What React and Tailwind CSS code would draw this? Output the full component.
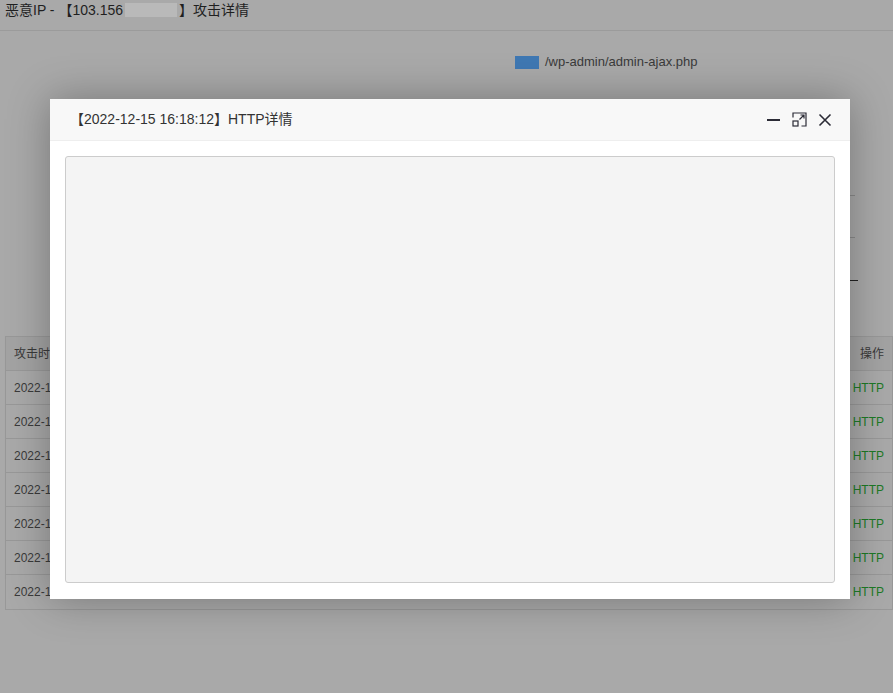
import React from "react";

const rows = Array.from({ length: 7 });

export default function App() {
  return (
    <div
      className="relative w-[893px] h-[693px] overflow-hidden bg-[#a9a9a9] text-[#2a2a2a]"
      style={{ fontFamily: '"Liberation Sans", Arial, "Noto Sans CJK SC", sans-serif' }}
    >
      {/* underlying page */}
      <div className="h-[31px] border-b border-[#9b9b9b] flex items-start pt-[1px] px-[5px] text-[14px] leading-[18px] text-[#1f1f1f]">
        <span>恶意IP - 【103.156</span>
        <span className="inline-block w-[52px] h-[14px] mt-[2px] mx-[2px] bg-[#b9b9b9]" />
        <span>】攻击详情</span>
      </div>
      <div className="relative h-[305px]">
        <div className="flex items-center gap-[6px] pl-[515px] pt-[24px] text-[13px] leading-[14px] text-[#3a3a3a]">
          <span className="inline-block w-[24px] h-[13px] bg-[#3f78b3]" />
          <span>/wp-admin/admin-ajax.php</span>
        </div>
        <div className="absolute left-[850px] top-[164px] w-[5px] h-px bg-[#8a8a8a]" />
        <div className="absolute left-[850px] top-[206px] w-[5px] h-px bg-[#8a8a8a]" />
        <div className="absolute left-[850px] top-[249px] w-[8px] h-px bg-[#222]" />
      </div>
      <div className="ml-[5px] border border-[#989898] text-[12px]">
        <div className="flex justify-between items-center h-[34px] px-[8px] bg-[#a3a3a3] border-b border-[#989898] text-[#3a3a3a]">
          <span>攻击时间</span>
          <span>操作</span>
        </div>
        {rows.map((_, i) => (
          <div
            key={i}
            className={`flex justify-between items-center h-[34px] px-[8px] ${i < 6 ? "border-b border-[#989898]" : ""}`}
          >
            <span className="text-[#3a3a3a]">2022-12-15 16:18:12</span>
            <span className="text-[#1d7a26]">HTTP</span>
          </div>
        ))}
      </div>

      {/* modal */}
      <div className="absolute left-[50px] top-[99px] w-[800px] h-[500px] bg-white shadow-[0_0_40px_rgba(0,0,0,0.3)] flex flex-col">
        <div className="h-[42px] bg-[#f8f8f8] border-b border-[#eeeeee] flex items-center justify-between pl-[20px] pr-[18px]">
          <span className="text-[14px] text-[#333]">【2022-12-15 16:18:12】HTTP详情</span>
          <div className="flex items-center gap-[11px] text-[#2b2b36]">
            <svg width="15" height="15" viewBox="0 0 15 15">
              <path d="M1 8h13" stroke="currentColor" strokeWidth="2" />
            </svg>
            <svg width="15" height="15" viewBox="0 0 15 15" fill="none" stroke="currentColor" strokeWidth="1.2">
              <path d="M1 5.5V1h13v13H9.5" />
              <rect x="1" y="9" width="5" height="5" />
              <path d="M7.5 7.5L12 3M8.5 3H12V6.5" />
            </svg>
            <svg width="14" height="14" viewBox="0 0 14 14" fill="none" stroke="currentColor" strokeWidth="1.6">
              <path d="M1.5 1.5l11 11M12.5 1.5l-11 11" />
            </svg>
          </div>
        </div>
        <div className="flex-1 px-[15px] pt-[15px] pb-[16px]">
          <div className="w-full h-full bg-[#f4f4f4] border border-[#cccccc] rounded-[3px]" />
        </div>
      </div>
    </div>
  );
}
